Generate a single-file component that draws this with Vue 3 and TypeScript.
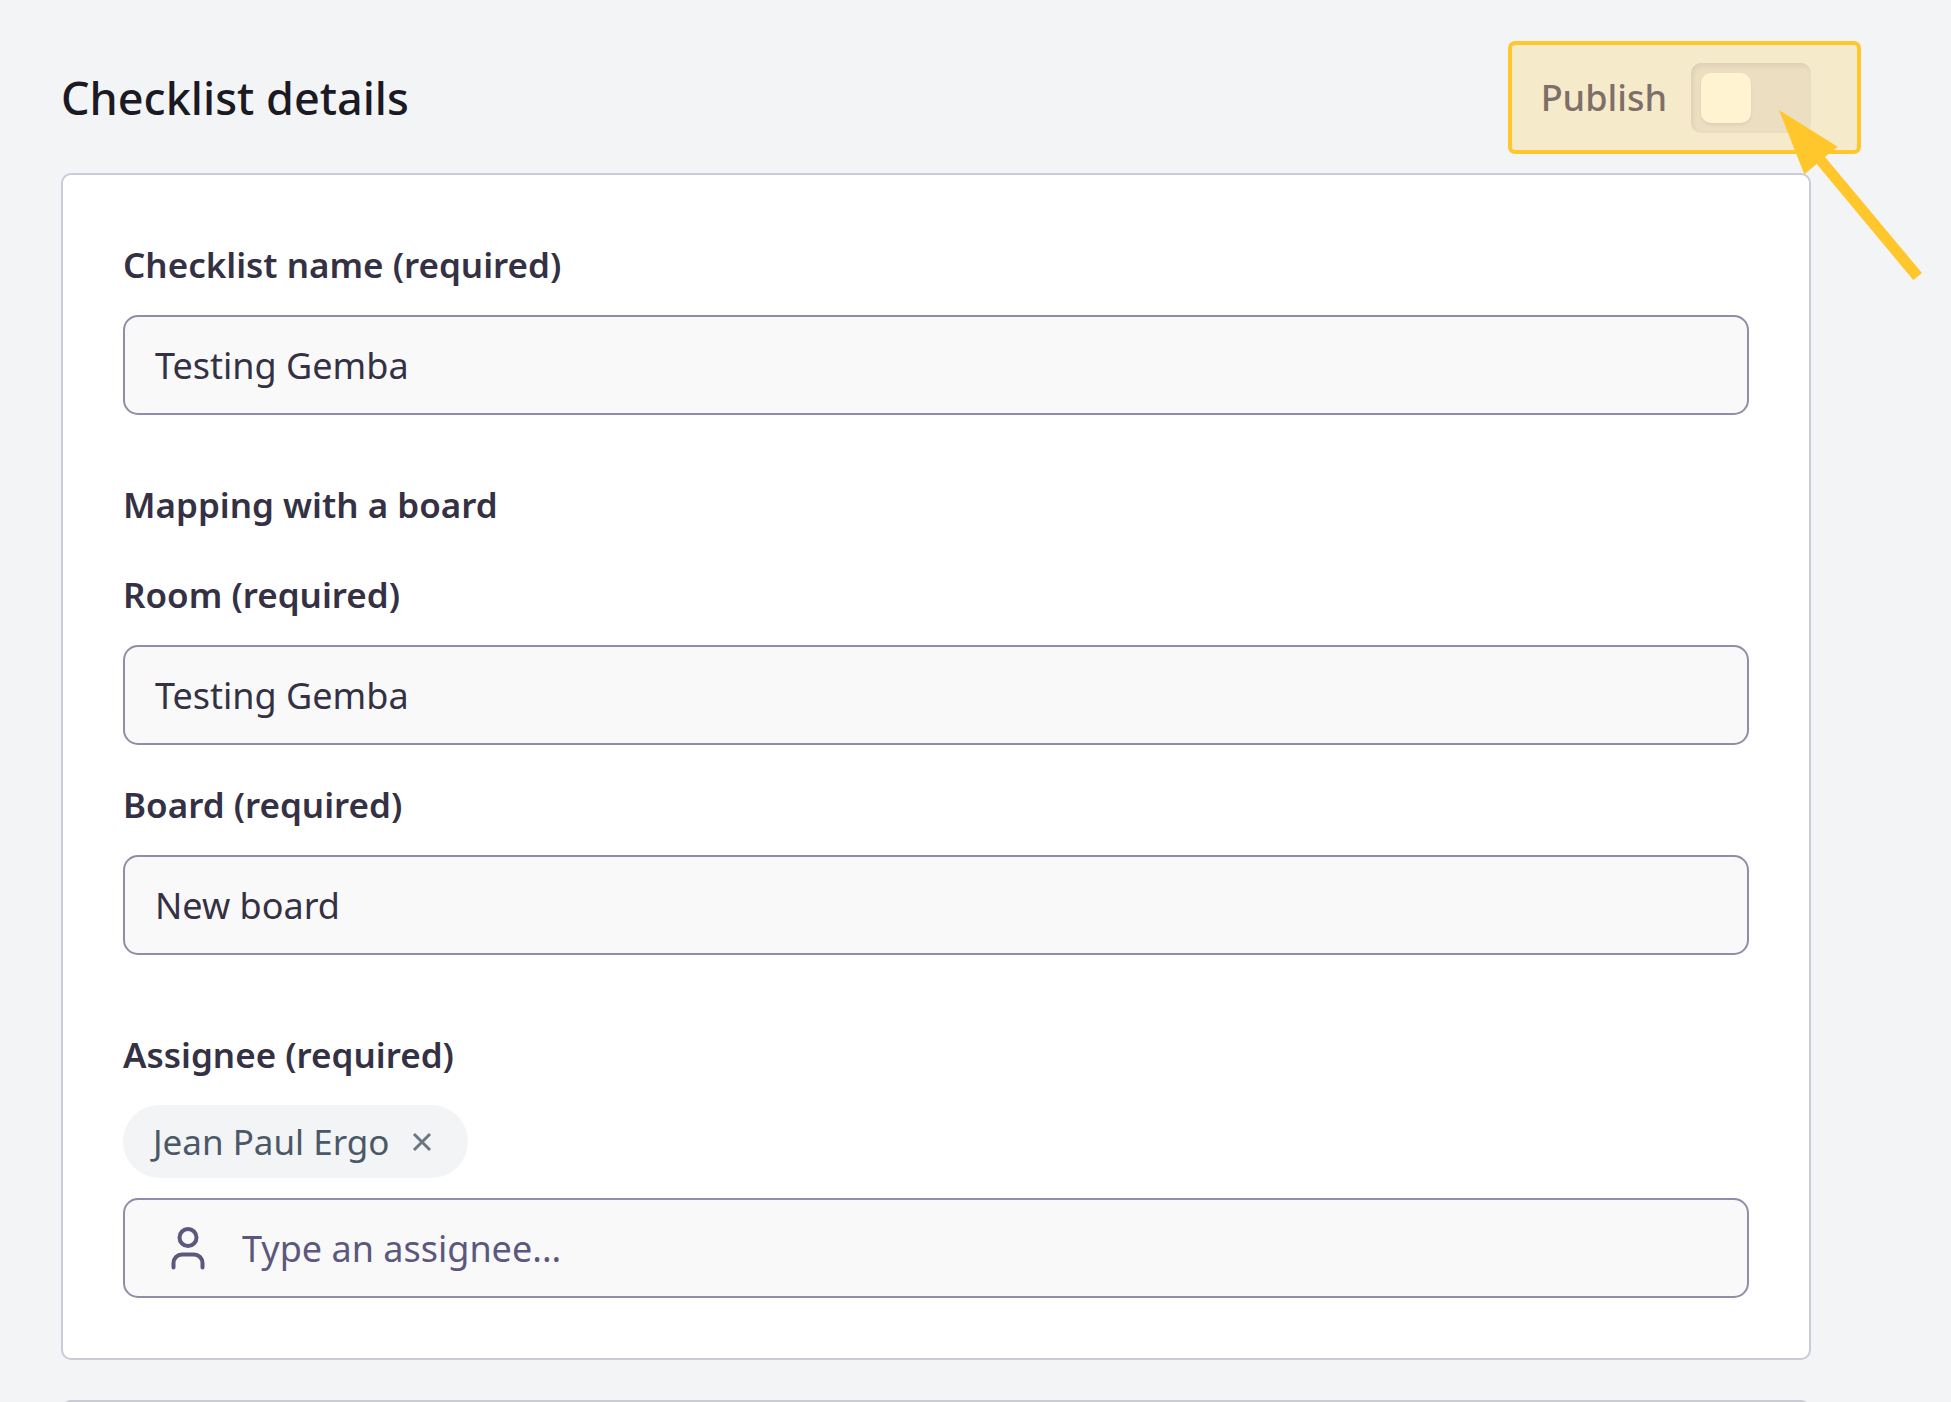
<script setup lang="ts">
import { ref } from 'vue'

const published = ref(false)
const checklistName = ref('Testing Gemba')
const room = ref('Testing Gemba')
const board = ref('New board')
const query = ref('')
const assignees = ref<string[]>(['Jean Paul Ergo'])

function removeAssignee(name: string): void {
  assignees.value = assignees.value.filter((item) => item !== name)
}
</script>

<template>
  <main class="page">
    <header class="header">
      <h1 class="title">Checklist details</h1>
      <div class="publish">
        <label class="publish-label" for="publish">Publish</label>
        <input id="publish" v-model="published" class="toggle" type="checkbox" role="switch" />
        <div class="highlight" aria-hidden="true"></div>
        <svg class="pointer" viewBox="0 0 144 171" width="144" height="171" aria-hidden="true">
          <path d="M0 0 58.7 36.7 46 47 143 163 134.3 170 37.7 54 25.3 64.3Z" fill="#ffc72c" />
        </svg>
      </div>
    </header>

    <form class="card" @submit.prevent>
      <div class="field">
        <label class="label" for="name">Checklist name (required)</label>
        <input id="name" v-model="checklistName" class="input" type="text" />
      </div>

      <section class="group">
        <h2 class="label">Mapping with a board</h2>
        <div class="field">
          <label class="label" for="room">Room (required)</label>
          <input id="room" v-model="room" class="input" type="text" />
        </div>
        <div class="field">
          <label class="label" for="board">Board (required)</label>
          <input id="board" v-model="board" class="input" type="text" />
        </div>
      </section>

      <div class="field assignee">
        <label class="label" for="assignee">Assignee (required)</label>
        <div class="chips">
          <span v-for="name in assignees" :key="name" class="chip">
            {{ name }}
            <button class="remove" type="button" :aria-label="`Remove ${name}`" @click="removeAssignee(name)">
              <svg viewBox="0 0 20 20" width="20" height="20" aria-hidden="true">
                <path d="M2 2 18 18M18 2 2 18" fill="none" stroke="currentColor" stroke-width="3" />
              </svg>
            </button>
          </span>
        </div>
        <div class="input search">
          <svg class="person" viewBox="0 0 36 44" width="36" height="44" aria-hidden="true">
            <g fill="none" stroke="currentColor" stroke-width="4" stroke-linecap="round">
              <circle cx="18" cy="11.5" r="8.5" />
              <path d="M3.5 41.5V37A8.5 8.5 0 0 1 12 28.5H24A8.5 8.5 0 0 1 32.5 37V41.5" />
            </g>
          </svg>
          <input id="assignee" v-model="query" class="search-input" type="text" placeholder="Type an assignee..." />
        </div>
      </div>
    </form>

    <section class="card next-card"></section>
  </main>
</template>

<style>
body {
  margin: 0;
  background: #f3f4f6;
}
</style>

<style scoped>
.page {
  box-sizing: border-box;
  min-height: 100vh;
  padding: 63px 140px 0 61px;
  overflow: hidden;
  position: relative;
  background: #f3f4f6;
  color: #353145;
  font-family: "Noto Sans", sans-serif;
  font-size: 36px;
}

.header {
  display: flex;
  justify-content: space-between;
  align-items: center;
  height: 70px;
  margin-bottom: 40px;
}

.title {
  margin: 0;
  color: #1b1a24;
  font-size: 45px;
  font-weight: 500;
  line-height: 68px;
}

.publish {
  position: relative;
  display: flex;
  align-items: center;
  gap: 24px;
}

.publish-label {
  color: #5c577d;
  font-weight: 500;
  line-height: 60px;
}

.toggle {
  appearance: none;
  box-sizing: border-box;
  display: flex;
  width: 120px;
  height: 70px;
  margin: 0;
  padding: 10px;
  border-radius: 10px;
  background: #e7e5eb;
  box-shadow: inset 2px 3px 4px rgba(53, 49, 69, 0.1);
}

.toggle::before {
  content: "";
  width: 50px;
  height: 50px;
  border-radius: 10px;
  background: #fff;
  box-shadow: 0 2px 3px rgba(53, 49, 69, 0.1);
}

.toggle:checked {
  justify-content: flex-end;
}

/* Callout drawn over the publish control */
.highlight {
  position: absolute;
  inset: -22px -50px -21px -33px;
  border: 4px solid #ffc72c;
  border-radius: 7px;
  background: rgba(255, 199, 44, 0.22);
  background-clip: padding-box;
  pointer-events: none;
}

.pointer {
  position: absolute;
  top: 47px;
  right: -112px;
  z-index: 1;
  pointer-events: none;
}

.card {
  padding: 60px;
  border: 2px solid #cbcad7;
  border-radius: 10px;
  background: #fff;
}

.next-card {
  margin: 40px 0 -122px;
}

.field {
  display: flex;
  flex-direction: column;
}

.label {
  margin: 0;
  padding-bottom: 20px;
  font-size: 35px;
  font-weight: 600;
  line-height: 60px;
}

.group {
  display: flex;
  flex-direction: column;
  margin-top: 60px;
}

.group h2 {
  padding-bottom: 30px;
}

.group .field + .field {
  margin-top: 30px;
}

.assignee {
  margin-top: 70px;
}

.input {
  box-sizing: border-box;
  width: 100%;
  height: 100px;
  padding: 0 30px;
  border: 2px solid #918da9;
  border-radius: 15px;
  background: #f9f9f9;
  color: #353145;
  font: inherit;
}

.chips {
  display: flex;
  flex-wrap: wrap;
  gap: 20px;
  margin-bottom: 20px;
}

.chip {
  display: flex;
  align-items: center;
  gap: 22px;
  padding: 7px 36px 6px 30px;
  border-radius: 37px;
  background: #f3f4f6;
  color: #4b5866;
  font-size: 35px;
  line-height: 60px;
}

.remove {
  display: flex;
  padding: 0;
  border: 0;
  background: none;
  color: #6b7785;
}

.search {
  display: flex;
  align-items: center;
  gap: 36px;
  padding-left: 45px;
}

.person {
  flex: none;
  color: #5c577d;
}

.search-input {
  flex: 1;
  min-width: 0;
  padding: 0;
  border: 0;
  outline: 0;
  background: none;
  color: #353145;
  font: inherit;
}

.search-input::placeholder {
  color: #5c577d;
  opacity: 1;
}
</style>
